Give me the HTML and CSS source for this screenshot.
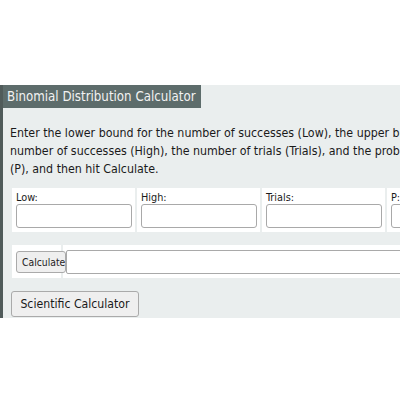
FILE: index.html
```html
<!DOCTYPE html>
<html>
<head>
<meta charset="utf-8">
<link rel="stylesheet" href="styles.css">
</head>
<body>
<div class="page">
  <div class="panel">
    <div class="title">Binomial Distribution Calculator</div>
    <p class="intro">Enter the lower bound for the number of successes (Low), the upper bound for the<br>number of successes (High), the number of trials (Trials), and the probability of success<br>(P), and then hit Calculate.</p>
    <div class="fields">
      <div class="cell"><label class="lbl">Low:</label><input class="box" type="text"></div>
      <div class="cell"><label class="lbl">High:</label><input class="box" type="text"></div>
      <div class="cell"><label class="lbl">Trials:</label><input class="box" type="text"></div>
      <div class="cell"><label class="lbl">P:</label><input class="box" type="text"></div>
    </div>
    <div class="calcrow">
      <div class="cell first"><button class="calc">Calculate</button></div>
      <div class="cell result"><input class="out" type="text"></div>
    </div>
    <button class="sci">Scientific Calculator</button>
  </div>
</div>
</body>
</html>
```
FILE: styles.css
```css
html, body {
  margin: 0;
  padding: 0;
  overflow: hidden;
  background: #ffffff;
}
body {
  font-family: "DejaVu Sans Condensed", "DejaVu Sans", sans-serif;
  color: #1a1a1a;
}
.page {
  padding-top: 85px;
  width: 700px;
}
.panel {
  background: #eaeeee;
  border-left: 3px solid #505b5a;
  padding: 0 0 1px 7px;
}
.title {
  display: inline-block;
  margin-left: -7px;
  background: #5d6c6b;
  color: #f2f2f2;
  font-size: 13.2px;
  line-height: 23px;
  padding: 0 5px 0 4px;
}
.intro {
  margin: 16px 0 8px;
  font-size: 12.3px;
  line-height: 18px;
  white-space: nowrap;
}
.fields, .calcrow {
  display: flex;
  gap: 2px;
  padding: 2px;
}
.cell {
  background: #ffffff;
  padding: 3px 3px 4px 4px;
  width: 116px;
  flex: none;
  display: flex;
  flex-direction: column;
}
.lbl {
  font-size: 10.8px;
  line-height: 13px;
}
.box {
  box-sizing: border-box;
  width: 116px;
  height: 24px;
  margin: 0;
  border: 1px solid #a9a9a9;
  border-radius: 3px;
  background: #fff;
}
.calcrow {
  margin-top: 9px;
}
.calcrow .cell {
  flex-direction: row;
  align-items: center;
  padding: 5px 3px 4px 4px;
}
.calcrow .first {
  width: 42px;
  overflow: visible;
}
.calc {
  flex: none;
  width: 50px;
  height: 22px;
  padding: 0 0 0 5px;
  margin: 0;
  text-align: left;
  white-space: nowrap;
  overflow: hidden;
  font-family: inherit;
  font-size: 10.3px;
  color: #222;
  background: #efefef;
  border: 1px solid #aaaaaa;
  border-radius: 3px;
  position: relative;
  z-index: 1;
}
.calcrow .result {
  width: 500px;
  padding-left: 3px;
}
.out {
  box-sizing: border-box;
  width: 500px;
  height: 24px;
  margin: 0;
  border: 1px solid #a9a9a9;
  border-radius: 2px;
  background: #fff;
}
.sci {
  margin: 11px 0 0 1px;
  width: 128px;
  height: 26px;
  padding: 0;
  font-family: inherit;
  font-size: 12.2px;
  color: #1a1a1a;
  background: #efefef;
  border: 1px solid #aaaaaa;
  border-radius: 3px;
  display: block;
}
```
